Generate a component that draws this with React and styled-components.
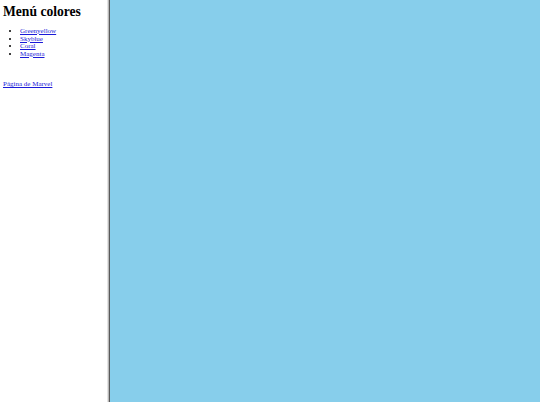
import React from 'react'
import styled, { createGlobalStyle } from 'styled-components'

const GlobalStyle = createGlobalStyle`
  html, body {
    margin: 0;
    padding: 0;
    background: #fff;
    font-family: "Liberation Serif", "Times New Roman", serif;
  }
`

const colors = ['Greenyellow', 'Skyblue', 'Coral', 'Magenta']

function App() {
  return (
    <>
      <GlobalStyle />
      <Frameset>
        <MenuFrame>
          <Title>Menú colores</Title>
          <ColorList>
            {colors.map((c) => (
              <li key={c}>
                <Link href="#">{c}</Link>
              </li>
            ))}
          </ColorList>
          <MarvelLink href="#">Página de Marvel</MarvelLink>
        </MenuFrame>
        <Divider />
        <ContentFrame />
      </Frameset>
    </>
  )
}

const Frameset = styled.div`
  display: flex;
  width: 540px;
  height: 402px;
`

const MenuFrame = styled.div`
  width: 104px;
  padding: 4px 0 0 3px;
  background: #fff;
`

const Title = styled.h1`
  margin: 0;
  font-size: 13.6px;
  font-weight: bold;
  line-height: 15px;
`

const ColorList = styled.ul`
  margin: 9px 0 0;
  padding-left: 17px;
  font-size: 7px;
  line-height: 7.6px;
`

const Link = styled.a`
  color: #1a1ad8;
  text-decoration: underline;
`

const MarvelLink = styled(Link)`
  display: block;
  margin-top: 22px;
  font-size: 7px;
  line-height: 8px;
`

const Divider = styled.div`
  width: 3px;
  background: linear-gradient(to right, #e4e4e4 0 1px, #b8b8b8 1px 2px, #5a5a5a 2px 3px);
`

const ContentFrame = styled.div`
  flex: 1;
  background: #87ceeb;
`

export default App
